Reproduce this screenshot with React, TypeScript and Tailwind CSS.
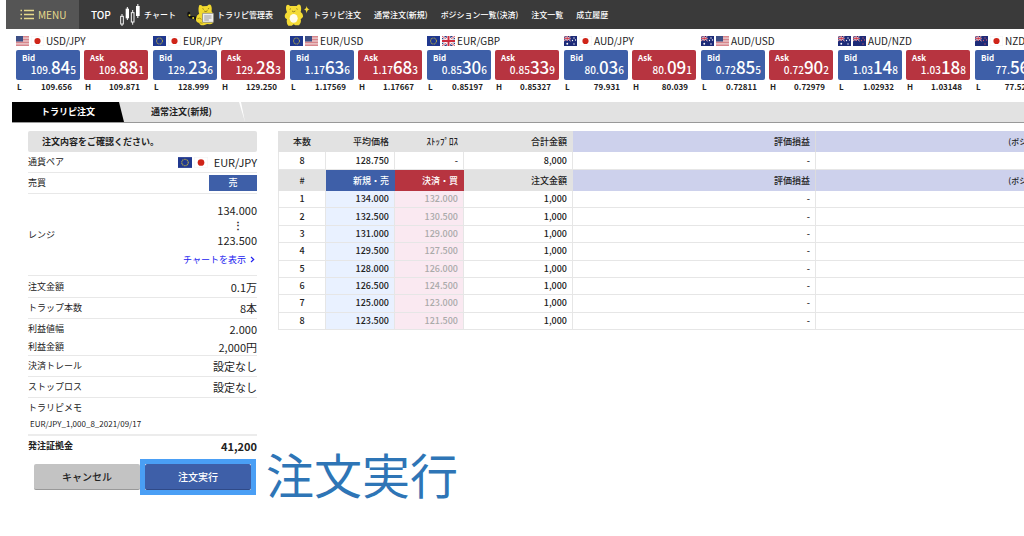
import type { ReactNode } from "react";

type FlagCode = "US" | "JP" | "EU" | "GB" | "AU" | "NZ";

function SouthernFlag({ stars }: { stars: string }) {
  return (
    <>
      <rect width="26" height="20" fill="#1d2b78" />
      <path d="M0 0L13 10M13 0L0 10" stroke="#fff" strokeWidth="1.8" />
      <path d="M0 0L13 10M13 0L0 10" stroke="#c8283c" strokeWidth="0.9" />
      <path d="M6.5 0V10M0 5H13" stroke="#fff" strokeWidth="2.6" />
      <path d="M6.5 0V10M0 5H13" stroke="#c8283c" strokeWidth="1.6" />
      <g fill={stars}>
        <circle cx="20" cy="4" r="1.3" />
        <circle cx="17" cy="9" r="1.3" />
        <circle cx="23" cy="8" r="1.3" />
        <circle cx="20" cy="16" r="1.4" />
      </g>
    </>
  );
}

function Flag({ code, large }: { code: FlagCode; large?: boolean }) {
  const art: Record<FlagCode, ReactNode> = {
    US: (
      <>
        <rect width="26" height="20" fill="#f3e3e4" />
        {[0, 1, 2, 3, 4, 5, 6].map((i) => (
          <rect key={i} y={i * 3.08} width="26" height="1.54" fill="#cf6a72" />
        ))}
        <rect width="14" height="11" fill="#3d4f85" />
      </>
    ),
    JP: (
      <>
        <rect width="26" height="20" fill="#fff" />
        <rect x="0.5" y="0.5" width="25" height="19" fill="none" stroke="#f3f3f3" />
        <circle cx="13" cy="10" r="6.2" fill="#cf2418" />
      </>
    ),
    EU: (
      <>
        <rect width="26" height="20" fill="#20388f" />
        <circle cx="13" cy="10" r="6" fill="none" stroke="#a9a24e" strokeWidth="2.2" strokeDasharray="2.1 1.04" />
      </>
    ),
    GB: (
      <>
        <rect width="26" height="20" fill="#27397f" />
        <path d="M0 0L26 20M26 0L0 20" stroke="#fff" strokeWidth="4.4" />
        <path d="M0 0L26 20M26 0L0 20" stroke="#cc2a3d" strokeWidth="1.6" />
        <path d="M13 0V20M0 10H26" stroke="#fff" strokeWidth="7" />
        <path d="M13 0V20M0 10H26" stroke="#cc2a3d" strokeWidth="4" />
      </>
    ),
    AU: (
      <>
        <SouthernFlag stars="#fff" />
        <circle cx="6.5" cy="15.5" r="1.9" fill="#fff" />
      </>
    ),
    NZ: <SouthernFlag stars="#c9556d" />,
  };
  return (
    <svg viewBox="0 0 26 20" className={large ? "h-[11px] w-[14px] shrink-0" : "h-[10px] w-[13px] shrink-0"} aria-hidden="true">
      {art[code]}
    </svg>
  );
}

type Price = [string, string, string];
interface Rate {
  pair: string;
  flags: [FlagCode, FlagCode];
  bid: Price;
  ask: Price;
  low: string;
  high: string;
}

const rates: Rate[] = [
  { pair: "USD/JPY", flags: ["US", "JP"], bid: ["109.", "84", "5"], ask: ["109.", "88", "1"], low: "109.656", high: "109.871" },
  { pair: "EUR/JPY", flags: ["EU", "JP"], bid: ["129.", "23", "6"], ask: ["129.", "28", "3"], low: "128.999", high: "129.250" },
  { pair: "EUR/USD", flags: ["EU", "US"], bid: ["1.17", "63", "6"], ask: ["1.17", "68", "3"], low: "1.17569", high: "1.17667" },
  { pair: "EUR/GBP", flags: ["EU", "GB"], bid: ["0.85", "30", "6"], ask: ["0.85", "33", "9"], low: "0.85197", high: "0.85327" },
  { pair: "AUD/JPY", flags: ["AU", "JP"], bid: ["80.", "03", "6"], ask: ["80.", "09", "1"], low: "79.931", high: "80.039" },
  { pair: "AUD/USD", flags: ["AU", "US"], bid: ["0.72", "85", "5"], ask: ["0.72", "90", "2"], low: "0.72811", high: "0.72979" },
  { pair: "AUD/NZD", flags: ["AU", "NZ"], bid: ["1.03", "14", "8"], ask: ["1.03", "18", "8"], low: "1.02932", high: "1.03148" },
  { pair: "NZD/JPY", flags: ["NZ", "JP"], bid: ["77.", "56", "0"], ask: ["77.", "62", "0"], low: "77.520", high: "77.790" },
];

function PriceCard({ side, price, mark, extreme }: { side: "Bid" | "Ask"; price: Price; mark: string; extreme: string }) {
  return (
    <div className="w-16">
      <button
        type="button"
        className={`flex h-[30px] w-full flex-col rounded-xs px-1 pt-1 text-white ${side === "Bid" ? "bg-[#3e5fa8]" : "bg-[#b73440]"}`}
      >
        <span className="self-start pl-0.5 text-[8px] leading-[8px] font-bold">{side}</span>
        <span className="self-end text-[10px] leading-[10px] font-medium whitespace-nowrap">
          {price[0]}
          <span className="text-[17px]">{price[1]}</span>
          {price[2]}
        </span>
      </button>
      <div className="flex justify-between pr-2 pl-px text-[8px] leading-[13px] font-bold">
        <span>{mark}</span>
        <span>{extreme}</span>
      </div>
    </div>
  );
}

function RateBlock({ rate }: { rate: Rate }) {
  return (
    <section className="shrink-0">
      <h2 className="flex h-[14px] items-center gap-[2px] text-[10px] leading-[14px]">
        <Flag code={rate.flags[0]} />
        <Flag code={rate.flags[1]} />
        <span>{rate.pair}</span>
      </h2>
      <div className="flex gap-1 pt-0.5">
        <PriceCard side="Bid" price={rate.bid} mark="L" extreme={rate.low} />
        <PriceCard side="Ask" price={rate.ask} mark="H" extreme={rate.high} />
      </div>
    </section>
  );
}

function MenuIcon() {
  return (
    <svg viewBox="0 0 14 11" className="h-[11px] w-[14px]" aria-hidden="true">
      <path d="M4 1.5H14M4 5.5H14M4 9.5H14" stroke="#e6da8c" strokeWidth="1.3" />
      <path d="M0.5 1.5H2M0.5 5.5H2M0.5 9.5H2" stroke="#e6da8c" strokeWidth="1.3" />
    </svg>
  );
}

function CandleIcon() {
  return (
    <svg viewBox="0 0 60 66" className="h-[22px] w-5" aria-hidden="true">
      <g stroke="#f4f4f4" strokeWidth="3" fill="none">
        <path d="M6 30V37M6 60V66M38 18V26M38 54V62" />
        <rect x="2" y="37" width="8" height="23" />
        <rect x="34" y="26" width="8" height="28" />
      </g>
      <g fill="#fff">
        <rect x="17" y="14" width="10" height="29" />
        <rect x="20.5" y="9" width="3" height="39" />
        <rect x="48" y="6" width="11" height="30" />
        <rect x="52" y="0" width="3" height="42" />
      </g>
    </svg>
  );
}

function CatBoardIcon() {
  return (
    <svg viewBox="0 0 80 66" className="h-[22px] w-[27px]" aria-hidden="true">
      <path d="M5 27Q2 40 14 40Q24 39 28 45" fill="none" stroke="#111" strokeWidth="8" strokeLinecap="round" />
      <circle cx="7" cy="34" r="3" fill="#e5d526" />
      <circle cx="18" cy="42" r="3" fill="#e5d526" />
      <path d="M36 4Q41 1 46 7L60 6Q68 -2 72 5Q75 12 73 22L79 31V52Q78 61 68 61L60 60L50 64Q38 65 36 57Q24 55 27 42Q28 33 36 29Q32 18 36 4Z" fill="#f2d92e" />
      <path d="M46 14L50 16M62 15L66 13M51 21Q56 25 61 20" stroke="#594c16" strokeWidth="2" fill="none" />
      <path d="M31 44Q38 40 43 46M38 56L46 58" stroke="#8a7518" strokeWidth="2" fill="none" />
      <rect x="46" y="28" width="33" height="27" rx="1" fill="#eee" stroke="#777" strokeWidth="2" />
      <path d="M51 36H73M51 42H73M51 48H65" stroke="#999" strokeWidth="3" />
    </svg>
  );
}

function CatSparkleIcon() {
  return (
    <svg viewBox="0 0 78 66" className="h-[22px] w-[26px]" aria-hidden="true">
      <path d="M7 5Q12 -1 18 6H38Q45 -2 50 5Q53 14 50 24Q58 29 57 38Q54 44 50 45Q53 56 45 64H34L29 61L23 65H13Q6 58 9 46Q2 44 2 36Q3 28 9 25Q4 14 7 5Z" fill="#f4db35" />
      <ellipse cx="29" cy="43" rx="12" ry="13" fill="#fffceb" />
      <path d="M17 16L21 14M37 14L41 16M24 21Q29 26 34 21" stroke="#695719" strokeWidth="2" fill="none" />
      <path d="M68 5Q69 15 77 16Q69 18 68 28Q67 18 60 16Q67 15 68 5Z" fill="#f4db35" />
    </svg>
  );
}

function Header() {
  const linkText = "whitespace-nowrap text-[8px] leading-3 font-medium";
  return (
    <header className="ml-1.5 flex h-[29px] items-center overflow-hidden bg-[#3a3a3a] text-white">
      <button type="button" className="flex h-full w-[73px] shrink-0 items-center gap-1 bg-[#555] pl-3.5 text-[10px] text-[#e6da8c]">
        <MenuIcon />
        MENU
      </button>
      <nav className="flex shrink-0 items-center gap-[13px] pl-3">
        <a href="#top" className="w-4 text-[10px] leading-3 font-medium">TOP</a>
        <a href="#chart" className={`flex items-center gap-1 ${linkText}`}><CandleIcon />チャート</a>
        <a href="#trap" className={`-ml-0.5 flex items-center gap-[3px] ${linkText}`}><CatBoardIcon />トラリピ管理表</a>
        <a href="#trap-order" className={`-ml-0.5 flex items-center gap-[3px] ${linkText}`}><CatSparkleIcon />トラリピ注文</a>
        <a href="#order" className={linkText}>通常注文(新規)</a>
        <a href="#positions" className={linkText}>ポジション一覧(決済)</a>
        <a href="#orders" className={linkText}>注文一覧</a>
        <a href="#history" className={linkText}>成立履歴</a>
      </nav>
    </header>
  );
}

function Tabs() {
  return (
    <div role="tablist" className="ml-3 flex h-[21px] border-b border-[#999] bg-[#e2e2e2] text-[9px] font-bold">
      <button
        type="button"
        role="tab"
        aria-selected="true"
        className="w-28 bg-black text-white [clip-path:polygon(0_0,107px_0,100%_100%,0_100%)]"
      >
        トラリピ注文
      </button>
      <button type="button" role="tab" aria-selected="false" className="w-[115px]">
        通常注文(新規)
      </button>
      <span className="w-1.5 bg-white [clip-path:polygon(0_0,2px_0,100%_100%)]" />
    </div>
  );
}

function Row({ label, children, className }: { label: string; children: ReactNode; className: string }) {
  return (
    <div className={`flex items-center justify-between ${className}`}>
      <dt className="text-[9px]">{label}</dt>
      <dd>{children}</dd>
    </div>
  );
}

const line = "border-b border-[#e8e8e8]";

function OrderPanel() {
  return (
    <section className="w-[229px] shrink-0">
      <h1 className="h-[21px] rounded-xs bg-[#e2e2e2] px-[14px] text-[9px] leading-[21px] font-bold">注文内容をご確認ください。</h1>
      <dl className="text-[11px] leading-4">
        <Row label="通貨ペア" className={`h-[21px] ${line}`}>
          <span className="flex items-center gap-1.5">
            <span className="flex items-center gap-0.5">
              <Flag code="EU" large />
              <Flag code="JP" large />
            </span>
            EUR/JPY
          </span>
        </Row>
        <Row label="売買" className={`h-[21px] ${line}`}>
          <span className="block w-12 bg-[#3e5fa8] text-center text-[9px] font-medium text-white">売</span>
        </Row>
        <Row label="レンジ" className={`h-[82px] ${line}`}>
          <span className="flex flex-col items-end">
            <span>134.000</span>
            <span className="pr-[14px] text-[10px] leading-[14px] font-bold">⋮</span>
            <span>123.500</span>
            <a href="#chart" className="flex items-center gap-1 pt-1 pr-0.5 text-[9px] text-[#2222f0]">
              チャートを表示
              <svg viewBox="0 0 5 7" className="h-[7px] w-[5px]" aria-hidden="true">
                <path d="M1 1L3.7 3.5L1 6" fill="none" stroke="#2222f0" strokeWidth="1.2" />
              </svg>
            </a>
          </span>
        </Row>
        <Row label="注文金額" className={`h-[22px] ${line}`}>0.1万</Row>
        <Row label="トラップ本数" className={`h-[21px] ${line}`}>8本</Row>
        <Row label="利益値幅" className="h-[19px]">2.000</Row>
        <Row label="利益金額" className={`h-[18px] ${line}`}>2,000円</Row>
        <Row label="決済トレール" className={`h-[21px] ${line}`}>設定なし</Row>
        <Row label="ストップロス" className={`h-[21px] ${line}`}>設定なし</Row>
        <div className="h-[38px] border-b-2 border-[#ececec] pt-0.5">
          <dt className="text-[9px]">トラリピメモ</dt>
          <dd className="pl-0.5 text-[8px]">EUR/JPY_1,000_8_2021/09/17</dd>
        </div>
        <Row label="発注証拠金" className="h-[19px] font-bold">41,200</Row>
      </dl>
      <div className="mt-1 flex w-max items-start pl-1.5 text-[10px]">
        <button type="button" className="h-[26px] w-[106px] self-center rounded-xs border-b border-[#999] bg-[#c3c3c3] font-medium">キャンセル</button>
        <span className="block border-5 border-[#4a9ff5]">
          <button type="button" className="block h-[26px] w-[106px] rounded-xs border-b border-[#2f4a88] bg-[#3e5fa8] font-medium text-white">注文実行</button>
        </span>
        <strong className="pl-2.5 text-[48px] leading-7 font-normal text-[#2e75b6]">注文実行</strong>
      </div>
    </section>
  );
}

const details: [string, string][] = [
  ["134.000", "132.000"],
  ["132.500", "130.500"],
  ["131.000", "129.000"],
  ["129.500", "127.500"],
  ["128.000", "126.000"],
  ["126.500", "124.500"],
  ["125.000", "123.000"],
  ["123.500", "121.500"],
];

function Columns() {
  return (
    <colgroup>
      <col className="w-12" />
      <col className="w-[69px]" />
      <col className="w-[69px]" />
      <col className="w-[109px]" />
      <col className="w-[243px]" />
      <col />
    </colgroup>
  );
}

const tableStyle = "w-full min-w-[782px] table-fixed border-separate border-spacing-0 text-right text-[9px] leading-3 font-medium";
const grayHead = "bg-[#e2e2e2] px-1.5 font-medium";
const blueHead = "border-r border-[#dcdcdc] bg-[#cdd1ec] px-[5px] font-medium";
const cell = "border-r border-b border-[#e6e6e6] pr-[5px]";

function PositionTables() {
  return (
    <section className="min-w-0 flex-1 overflow-hidden">
      <table className={tableStyle}>
        <Columns />
        <thead>
          <tr className="h-[21px]">
            <th className={`text-center ${grayHead}`}>本数</th>
            <th className={grayHead}>平均価格</th>
            <th className={grayHead}>ｽﾄｯﾌﾟﾛｽ</th>
            <th className={grayHead}>合計金額</th>
            <th className={blueHead}>評価損益</th>
            <th className={`text-[8px] ${blueHead}`}>(ポジション)</th>
          </tr>
        </thead>
        <tbody>
          <tr className="h-[18px]">
            <td className="border-r border-b border-l border-[#e6e6e6] text-center">8</td>
            <td className={cell}>128.750</td>
            <td className={cell}>-</td>
            <td className={cell}>8,000</td>
            <td className={cell}>-</td>
            <td className={cell} />
          </tr>
        </tbody>
      </table>
      <table className={`h-[160px] ${tableStyle}`}>
        <Columns />
        <thead>
          <tr className="h-[21px]">
            <th className={`text-center ${grayHead}`}>#</th>
            <th className="bg-[#3e5fa8] px-1.5 font-medium text-white">新規・売</th>
            <th className="bg-[#b73440] px-1.5 font-medium text-white">決済・買</th>
            <th className={grayHead}>注文金額</th>
            <th className={blueHead}>評価損益</th>
            <th className={`text-[8px] ${blueHead}`}>(ポジション)</th>
          </tr>
        </thead>
        <tbody>
          {details.map(([entry, exit], i) => (
            <tr key={entry}>
              <td className="border-r border-b border-l border-[#e6e6e6] text-center">{i + 1}</td>
              <td className={`bg-[#e9f1ff] ${cell}`}>{entry}</td>
              <td className={`bg-[#fae9f1] text-[#aaa] ${cell}`}>{exit}</td>
              <td className={cell}>1,000</td>
              <td className={cell}>-</td>
              <td className={cell} />
            </tr>
          ))}
        </tbody>
      </table>
    </section>
  );
}

export default function App() {
  return (
    <div className="min-h-screen overflow-hidden bg-white font-['Noto_Sans_CJK_JP','Noto_Sans',sans-serif] text-[#222]">
      <Header />
      <div className="flex gap-[5px] overflow-hidden pt-[5px] pb-[9px] pl-4">
        {rates.map((rate) => (
          <RateBlock key={rate.pair} rate={rate} />
        ))}
      </div>
      <Tabs />
      <main className="flex gap-[21px] pt-2 pl-7">
        <OrderPanel />
        <PositionTables />
      </main>
    </div>
  );
}
